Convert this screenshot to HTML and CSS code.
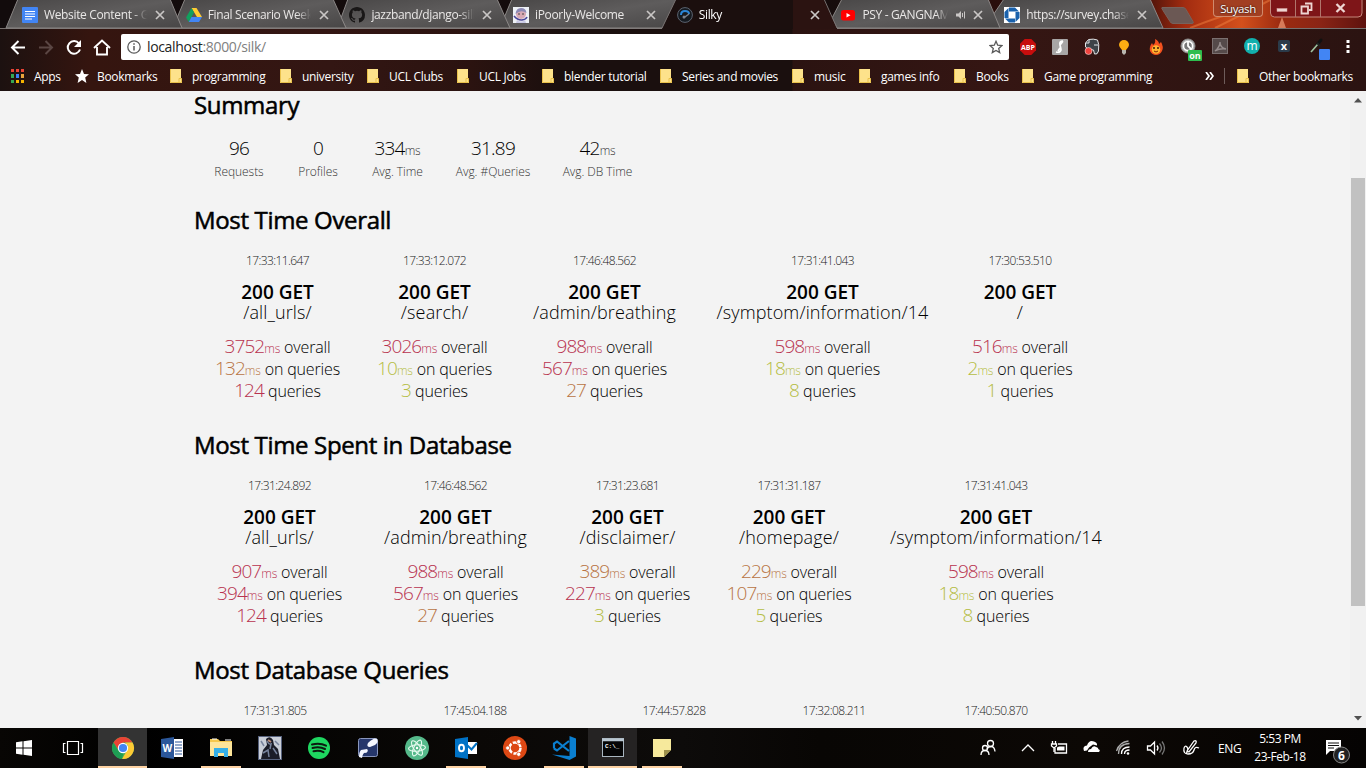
FILE: index.html
```html
<!DOCTYPE html>
<html lang="en">
<head>
<meta charset="utf-8">
<title>Silky</title>
<link rel="stylesheet" href="styles.css">
</head>
<body>
<svg class="defs" width="0" height="0">
  <defs>
    <symbol id="close" viewBox="0 0 10 10"><path d="M1 1l8 8M9 1L1 9" stroke="#c9c6c5" stroke-width="1.7"/></symbol>
    <symbol id="folder" viewBox="0 0 12 14"><path d="M0 0h11v9.500h1V14H0z" fill="#fde28b"/><path d="M.5 0v13.500H9V9.500h2.500V13.500H9" fill="none" stroke="#e9c14b"/></symbol>
  </defs>
</svg>
<header class="browser">
  <div class="tabstrip">
    <svg class="tabshapes" width="1366" height="29" viewBox="0 0 1366 29">
      <defs>
        <linearGradient id="tg" x1="0" x2="1" y1="0" y2="1"><stop offset="0" stop-color="#484646"/><stop offset=".5" stop-color="#5e5c5c"/><stop offset="1" stop-color="#484646"/></linearGradient>
        <linearGradient id="fire" x1="0" x2="1"><stop offset="0" stop-color="#3a0d08"/><stop offset=".2" stop-color="#a32c10"/><stop offset=".45" stop-color="#d4501c"/><stop offset=".62" stop-color="#9c2b10"/><stop offset=".8" stop-color="#8a2415"/><stop offset="1" stop-color="#5e120e"/></linearGradient>
      </defs>
      <path d="M1140 0H1366V28H1140z" fill="url(#fire)"/>
      <path d="M1215 28q40-20 55-28M1190 28q30-12 60-20" stroke="#f08040" stroke-width="2" fill="none" opacity=".5"/>
      <path d="M1282 17l4 11h-8z" fill="#ffb08a" opacity=".6"/>
      <path d="M0 28.500H662M837 28.500H1366" stroke="#77706e"/>
      <g stroke="#8a8685" fill="url(#tg)">
        <path d="M1000 28L991 18 1004 -1H1150L1163 28z"/>
        <path d="M837 28L832 18 842 -1H988L1000 28z"/>
        <path d="M510 28L504 18 512 -1H680L666 28z"/>
        <path d="M346 28L341 18 348 -1H497L510 28z"/>
        <path d="M182 28L177 18 185 -1H333L346 28z"/>
        <path d="M6 28L18 -1H170L182 28z"/>
      </g>
      <path d="M662 29L676 -1H824L837 29z" fill="#1b0f0e"/>
      <path d="M793 0H824L837 29H793z" fill="#2b1311"/>
      <path d="M662 28L676 -1M824 -1L837 28" stroke="#777170" fill="none"/>
      <path d="M1162 7.500h21q2 0 3 2l7 12q1 2-1 2h-19q-2 0-3-2l-7-11q-2-3-1-3z" fill="#6b5854" stroke="#77625c"/>
    </svg>
    <div class="tabs">
      <div class="tab"><svg class="fav" viewBox="0 0 16 16"><rect width="16" height="16" rx="1" fill="#4285f4"/><path d="M3 4.500h10M3 7h10M3 9.500h10M3 12h7" stroke="#fff" stroke-width="1.200"/></svg><span class="tt">Website Content - G</span><svg class="x"><use href="#close"/></svg></div>
      <div class="tab"><svg class="fav" viewBox="0 0 16 16"><path d="M5.500 1h5L16 10h-5z" fill="#fc3"/><path d="M5.500 1L8 5.500 2.800 15 0 10.500z" fill="#11a05d"/><path d="M5.500 10H16l-3 5H2.800z" fill="#4285f4"/></svg><span class="tt">Final Scenario Week</span><svg class="x"><use href="#close"/></svg></div>
      <div class="tab"><svg class="fav" viewBox="0 0 16 16"><path fill="#191717" d="M8 0C3.580 0 0 3.580 0 8c0 3.540 2.290 6.530 5.470 7.590.4.070.55-.17.55-.38 0-.19-.01-.82-.01-1.490-2.010.37-2.530-.49-2.690-.94-.09-.23-.48-.94-.82-1.130-.28-.15-.68-.52-.01-.53.63-.01 1.080.58 1.230.82.72 1.210 1.870.87 2.330.66.07-.52.28-.87.51-1.070-1.780-.2-3.640-.89-3.640-3.950 0-.87.31-1.590.82-2.150-.08-.2-.36-1.020.08-2.120 0 0 .67-.21 2.200.82a7.600 7.600 0 014 0c1.530-1.040 2.200-.82 2.200-.82.44 1.100.16 1.920.08 2.120.51.56.82 1.270.82 2.150 0 3.070-1.870 3.750-3.650 3.950.29.25.54.73.54 1.480 0 1.070-.01 1.930-.01 2.200 0 .21.15.46.55.38A8 8 0 0016 8c0-4.420-3.580-8-8-8z"/></svg><span class="tt">jazzband/django-silk</span><svg class="x"><use href="#close"/></svg></div>
      <div class="tab"><svg class="fav" viewBox="0 0 16 16"><rect width="16" height="16" fill="#eef1f6"/><circle cx="8" cy="7" r="5" fill="#d8a9b4"/><path d="M2.500 7Q3 1 8 1t5.500 5Q8 2 2.500 7z" fill="#8d8ab5"/><path d="M1 9q4 4.500 8 4t5-3" fill="none" stroke="#4a4598" stroke-width="1.600"/><path d="M4 13q4 3 8 0l1 3H3z" fill="#c9c8e4"/><path d="M5 7h2M9 7h2" stroke="#444"/></svg><span class="tt">iPoorly-Welcome</span><svg class="x"><use href="#close"/></svg></div>
      <div class="tab"><svg class="fav" viewBox="0 0 16 16"><circle cx="8" cy="8" r="7.400" fill="#151a20" stroke="#5c6470"/><path d="M4 8Q4 4 8 4t4 3" fill="none" stroke="#2a86d8" stroke-width="2"/><path d="M6.500 11L12 7" stroke="#79828e" stroke-width="1.500"/><circle cx="7" cy="10" r="1.500" fill="#79828e"/></svg><span class="tt on">Silky</span><svg class="x"><use href="#close"/></svg></div>
      <div class="tab"><svg class="fav" viewBox="0 0 16 16"><rect x="1" y="3" width="14" height="10.500" rx="2.500" fill="#f00"/><path d="M6.500 6v4.500l4-2.250z" fill="#fff"/></svg><span class="tt short">PSY - GANGNAM</span><svg class="spk" viewBox="0 0 10 10"><path d="M0 3.500h2.500L5 1v8L2.500 6.500H0z" fill="#c9c6c5"/><path d="M6.500 3v4M8.500 1.500v7" stroke="#c9c6c5"/></svg><svg class="x"><use href="#close"/></svg></div>
      <div class="tab"><svg class="fav" viewBox="0 0 16 16"><rect width="16" height="16" fill="#fff"/><path d="M5 .5h6l4 4H5zM15.500 5v6l-4 4V5zM11 15.500H5l-4-4h10zM.5 11V5l4-4v10z" fill="#1961ac"/><path d="M5 5h6v6H5z" fill="#fff"/></svg><span class="tt">https://survey.chase</span><svg class="x"><use href="#close"/></svg></div>
    </div>
    <div class="user">Suyash</div>
    <div class="wincontrols">
      <svg width="93" height="18" viewBox="0 0 93 18"><path d="M.5 -1V13q0 4 4 4H88q4 0 4-4V-1z" fill="#7e1518" stroke="#c4867a"/><path d="M25.500 0v17M50.500 0v17" stroke="#b0756c"/><rect x="7" y="8.500" width="10" height="3" fill="#eed5d2" stroke="#d5a4a0" stroke-width=".5"/><path d="M35 3.500h6.500V10H39M31.500 6.500h6.500v7h-6.500z" fill="none" stroke="#eed5d2" stroke-width="1.800"/><path d="M66.500 4l8 8M74.500 4l-8 8" stroke="#eed5d2" stroke-width="2.300"/></svg>
    </div>
  </div>
  <div class="toolbar">
    <svg class="nav" width="111" height="38" viewBox="0 0 111 38" fill="none" stroke="#fff" stroke-width="2">
      <path d="M25 18.500H12.500M18.500 12l-6.500 6.500 6.500 6.500"/>
      <path d="M39 18.500h12.500M45.500 12l6.500 6.500-6.500 6.500" stroke="#5a4643"/>
      <path d="M79 14.500A6.300 6.300 0 1080 20.500"/><path d="M81 11v7h-7z" fill="#fff" stroke="none"/>
      <path d="M94 19l8-7.500 8 7.500M97 18v7.500h10V18" stroke-width="1.900"/>
    </svg>
    <div class="omnibox">
      <svg width="14" height="14" viewBox="0 0 14 14"><circle cx="7" cy="7" r="6.200" fill="none" stroke="#5a5a5a" stroke-width="1.300"/><path d="M7 6v4.500M7 3.300v1.500" stroke="#5a5a5a" stroke-width="1.500"/></svg>
      <span class="url">localhost<i>:8000/silk/</i></span>
      <svg class="star" width="14" height="14" viewBox="0 0 14 14"><path d="M7 1.300l1.700 3.900 4.200.4-3.200 2.800 1 4.200L7 10.400l-3.700 2.200 1-4.200L1.100 5.600l4.200-.4z" fill="none" stroke="#5a5a5a" stroke-width="1.300"/></svg>
    </div>
    <div class="exts">
      <svg viewBox="0 0 32 32"><path d="M12.700 8h6.600L24 12.700v6.600L19.300 24h-6.600L8 19.300v-6.600z" fill="#c70d0d"/><text x="16" y="19" class="abp">ABP</text></svg>
      <svg viewBox="0 0 32 32"><rect x="8" y="8" width="16" height="16" rx="1" fill="#a8a6a6"/><path d="M19 10q-4 0-3 4t1 5q-1 3-5 2M19 10q-2 3-3 4M16 17l-2 3" fill="none" stroke="#fff" stroke-width="1.700"/></svg>
      <svg viewBox="0 0 32 32"><path d="M9.500 12l3-3.500q5-1 9 .5 2 4 1 11-1 4-4 3l-1-4q-6 0-8-3z" fill="#3d4348" stroke="#e3e5e6"/><path d="M10 12h3V9M18 14h4" stroke="#dfe5e7" fill="none"/><circle cx="12.500" cy="20" r="3.500" fill="#f0443f" stroke="#fff" stroke-width=".5"/></svg>
      <svg viewBox="0 0 32 32"><path d="M16 9a5 5 0 00-5 5q0 2 3 5h4q3-3 3-5a5 5 0 00-5-5z" fill="#fcae12"/><path d="M14 19h4v3l-2 2-2-2z" fill="#b9b6ae"/></svg>
      <svg viewBox="0 0 32 32"><path d="M15 8q4 2 4 5l2-2q3 5 1 9-2 4-6 4t-6-4q-1-4 2-8l1 2q3-2 2-6z" fill="#f4511e"/><circle cx="16" cy="18.500" r="4.300" fill="#ffb52e"/><path d="M13 17h2M17 17h2" stroke="#3b1a08" stroke-width="1.500"/><path d="M14 20q2 2 4 0" stroke="#7a260a" fill="none"/></svg>
      <svg viewBox="0 0 32 32"><circle cx="16" cy="15" r="7" fill="#bbb" stroke="#888"/><circle cx="16" cy="15" r="4.500" fill="#777" stroke="#fff" stroke-width="1.500"/><path d="M16 11v4l3 3" stroke="#fff" stroke-width="1.800" fill="none"/><rect x="16" y="19" width="14" height="11" rx="1" fill="#2dbd4e"/><text x="23" y="28" class="onb">on</text></svg>
      <svg viewBox="0 0 32 32"><rect x="8.500" y="7.500" width="15" height="15" fill="#554a4a" stroke="#7b7070"/><path d="M11 20q5-4 5-9 0 6 6 7-6-1-11 2z" fill="none" stroke="#958b8b" stroke-width="1.400"/></svg>
      <svg viewBox="0 0 32 32"><circle cx="16" cy="15" r="8" fill="#12b0ad"/><text x="16" y="19" class="em">m</text></svg>
      <svg viewBox="0 0 32 32"><rect x="10" y="9" width="12" height="12" rx="2" fill="#2b3b4a"/><text x="16" y="19" class="ex">x</text></svg>
      <svg viewBox="0 0 32 32"><path d="M21 9l-4 5" stroke="#111" stroke-width="3" stroke-linecap="round"/><path d="M18 13l-7 8" stroke="#9fc2a0" stroke-width="1.600"/><path d="M17 12l3 3" stroke="#222" stroke-width="2"/><rect x="19" y="18" width="11" height="11" rx="1" fill="#4285f4"/></svg>
      <svg viewBox="0 0 32 32"><path d="M14.500 9h3v3h-3zM14.500 14h3v3h-3zM14.500 19h3v3h-3z" fill="#fff"/></svg>
    </div>
  </div>
  <div class="bookmarks">
    <span class="bm apps"><svg width="13" height="14" viewBox="0 0 13 14"><path d="M0 0h3v3H0zM5 0h3v3H5zM10 0h3v3h-3z" fill="#ea4335"/><path d="M0 5h3v4H0z" fill="#34a853"/><path d="M5 5h3v4H5z" fill="#3b82f6"/><path d="M10 5h3v4h-3z" fill="#e8a33c"/><path d="M0 11h3v3H0z" fill="#34a853"/><path d="M5 11h3v3H5zM10 11h3v3h-3z" fill="#f5b400"/></svg>Apps</span>
    <span class="bm fav-bm"><svg width="14" height="14" viewBox="0 0 14 14"><path d="M7 0l2 4.900 5 .4-3.800 3.300L11.400 14 7 11 2.600 14l1.200-5.400L0 5.300l5-.4z" fill="#fff"/></svg>Bookmarks</span>
    <span class="bm"><svg class="fo"><use href="#folder"/></svg>programming</span>
    <span class="bm"><svg class="fo"><use href="#folder"/></svg>university</span>
    <span class="bm"><svg class="fo"><use href="#folder"/></svg>UCL Clubs</span>
    <span class="bm"><svg class="fo"><use href="#folder"/></svg>UCL Jobs</span>
    <span class="bm"><svg class="fo"><use href="#folder"/></svg>blender tutorial</span>
    <span class="bm"><svg class="fo"><use href="#folder"/></svg>Series and movies</span>
    <span class="bm"><svg class="fo"><use href="#folder"/></svg>music</span>
    <span class="bm"><svg class="fo"><use href="#folder"/></svg>games info</span>
    <span class="bm"><svg class="fo"><use href="#folder"/></svg>Books</span>
    <span class="bm"><svg class="fo"><use href="#folder"/></svg>Game programming</span>
    <span class="bm more"><svg width="9" height="8" viewBox="0 0 9 8"><path d="M1 0l3 4-3 4M5 0l3 4-3 4" fill="none" stroke="#fff" stroke-width="1.700"/></svg></span>
    <span class="bm"><svg class="fo"><use href="#folder"/></svg>Other bookmarks</span>
  </div>
</header>
<div class="viewport">
  <main>
    <h2>Summary</h2>
    <div class="summary">
      <div><p class="val">96</p><p class="lab">Requests</p></div>
      <div><p class="val">0</p><p class="lab">Profiles</p></div>
      <div><p class="val">334<small>ms</small></p><p class="lab">Avg. Time</p></div>
      <div><p class="val">31.89</p><p class="lab">Avg. #Queries</p></div>
      <div><p class="val">42<small>ms</small></p><p class="lab">Avg. DB Time</p></div>
    </div>
    <h2>Most Time Overall</h2>
    <div class="cells overall">
      <div><time>17:33:11.647</time><b>200 GET</b><p class="path">/all_urls/</p><p class="m"><i class="bad">3752<small>ms</small></i> overall</p><p class="m"><i class="mid">132<small>ms</small></i> on queries</p><p class="m"><i class="bad">124</i> queries</p></div>
      <div><time>17:33:12.072</time><b>200 GET</b><p class="path">/search/</p><p class="m"><i class="bad">3026<small>ms</small></i> overall</p><p class="m"><i class="good">10<small>ms</small></i> on queries</p><p class="m"><i class="good">3</i> queries</p></div>
      <div><time>17:46:48.562</time><b>200 GET</b><p class="path">/admin/breathing</p><p class="m"><i class="bad">988<small>ms</small></i> overall</p><p class="m"><i class="bad">567<small>ms</small></i> on queries</p><p class="m"><i class="mid">27</i> queries</p></div>
      <div><time>17:31:41.043</time><b>200 GET</b><p class="path">/symptom/information/14</p><p class="m"><i class="bad">598<small>ms</small></i> overall</p><p class="m"><i class="good">18<small>ms</small></i> on queries</p><p class="m"><i class="good">8</i> queries</p></div>
      <div><time>17:30:53.510</time><b>200 GET</b><p class="path">/</p><p class="m"><i class="bad">516<small>ms</small></i> overall</p><p class="m"><i class="good">2<small>ms</small></i> on queries</p><p class="m"><i class="good">1</i> queries</p></div>
    </div>
    <h2>Most Time Spent in Database</h2>
    <div class="cells database">
      <div><time>17:31:24.892</time><b>200 GET</b><p class="path">/all_urls/</p><p class="m"><i class="bad">907<small>ms</small></i> overall</p><p class="m"><i class="bad">394<small>ms</small></i> on queries</p><p class="m"><i class="bad">124</i> queries</p></div>
      <div><time>17:46:48.562</time><b>200 GET</b><p class="path">/admin/breathing</p><p class="m"><i class="bad">988<small>ms</small></i> overall</p><p class="m"><i class="bad">567<small>ms</small></i> on queries</p><p class="m"><i class="mid">27</i> queries</p></div>
      <div><time>17:31:23.681</time><b>200 GET</b><p class="path">/disclaimer/</p><p class="m"><i class="mid">389<small>ms</small></i> overall</p><p class="m"><i class="bad">227<small>ms</small></i> on queries</p><p class="m"><i class="good">3</i> queries</p></div>
      <div><time>17:31:31.187</time><b>200 GET</b><p class="path">/homepage/</p><p class="m"><i class="mid">229<small>ms</small></i> overall</p><p class="m"><i class="mid">107<small>ms</small></i> on queries</p><p class="m"><i class="good">5</i> queries</p></div>
      <div><time>17:31:41.043</time><b>200 GET</b><p class="path">/symptom/information/14</p><p class="m"><i class="bad">598<small>ms</small></i> overall</p><p class="m"><i class="good">18<small>ms</small></i> on queries</p><p class="m"><i class="good">8</i> queries</p></div>
    </div>
    <h2>Most Database Queries</h2>
    <div class="cells queries">
      <div><time>17:31:31.805</time></div><div><time>17:45:04.188</time></div><div><time>17:44:57.828</time></div><div><time>17:32:08.211</time></div><div><time>17:40:50.870</time></div>
    </div>
  </main>
  <div class="scroll"><svg width="8" height="5" viewBox="0 0 8 5"><path d="M0 4.500L4 0l4 4.500z" fill="#505050"/></svg><div class="thumb"></div><svg class="dn" width="8" height="5" viewBox="0 0 8 5"><path d="M0 0h8L4 4.500z" fill="#505050"/></svg></div>
</div>
<footer class="taskbar">
  <div class="tasks">
    <span class="t"><svg viewBox="0 0 24 24"><path d="M4 6.300l6.500-1v6.200H4zM11.500 5.200L20 4v7.500h-8.500zM4 12.500h6.500v6.200L4 17.800zM11.500 12.500H20V20l-8.500-1.200z" fill="#fff"/></svg></span>
    <span class="t"><svg viewBox="0 0 24 24" fill="none" stroke="#fff" stroke-width="1.200"><path d="M6.500 5.500h11v13h-11zM4.500 7.500h-2v9h2M19.500 7.500h2v9h-2"/></svg></span>
    <span class="t active run"><svg viewBox="0 0 24 24"><circle cx="12" cy="12" r="11" fill="#4caf50"/><path d="M2.500 6.500A11 11 0 0121.500 6.500H12L7.500 14z" fill="#ea4335"/><path d="M21.500 6.500A11 11 0 0111 23l5-8.500 1-5-3-3z" fill="#fcc934"/><path d="M2.500 6.500L7.300 14.700l5 2.500L11 23A11 11 0 012.500 6.500z" fill="#1e9e54"/><circle cx="12" cy="12" r="5.200" fill="#fff"/><circle cx="12" cy="12" r="4.100" fill="#4285f4"/></svg></span>
    <span class="t"><svg viewBox="0 0 24 24"><path d="M13 3h10v18H13z" fill="#fff"/><path d="M15 6h7M15 9h7M15 12h7M15 15h7M15 18h7" stroke="#2b579a" stroke-width="1.200"/><path d="M1 3l13-2v22L1 21z" fill="#2b579a"/><text x="7.300" y="15.500" class="wd">W</text></svg></span>
    <span class="t run2"><svg viewBox="0 0 24 24"><path d="M1 3h8l2 2h12v15H1z" fill="#f5c84c"/><path d="M1 6h22v14H1z" fill="#fde59a"/><path d="M3 3h5M16 4h6" stroke="#fff"/><path d="M5 21v-9h14v9h-4v-4H9v4z" fill="#36b0e8"/></svg></span>
    <span class="t"><svg viewBox="0 0 24 24"><rect x=".5" y=".5" width="23" height="23" fill="#c9ced8" stroke="#56617c"/><path d="M8 3q4-4 7 1l1 5 4 4 2 10H3l2-9 4-5z" fill="#1b1d28"/><path d="M9 5q2 4 4 3l-1 5M15 12l4 6M5 17l5-3 1 7M17 5l4 4M3 5l3 5" stroke="#77839d" fill="none" stroke-width="1.500"/><path d="M10 4l3 2" stroke="#b88a78" stroke-width="2"/></svg></span>
    <span class="t"><svg viewBox="0 0 24 24"><circle cx="12" cy="12" r="11" fill="#1ed760"/><path d="M5 8.500q8-2 14 1.200M5.500 12q7-1.800 12.500 1M6.500 15.300q5.500-1.300 10 .9" stroke="#0b1a10" stroke-width="2" fill="none" stroke-linecap="round"/></svg></span>
    <span class="t"><svg viewBox="0 0 24 24"><rect x="2.500" y="2.500" width="19" height="18" rx="2" fill="#26376c" stroke="#8996bd"/><path d="M12 7q6-6 9-4 2 3-2 6l-5 2q-4 0-2-4zM3 21q0-5 2-7l6-1q2 2-1 4-3-1-4 5z" fill="#f5f7ff"/></svg></span>
    <span class="t"><svg viewBox="0 0 24 24"><circle cx="12" cy="12" r="12" fill="#55b98a"/><g fill="none" stroke="#e7faef" stroke-width="1.100"><ellipse cx="12" cy="12" rx="3.200" ry="8.500" transform="rotate(25 12 12)"/><ellipse cx="12" cy="12" rx="3.200" ry="8.500" transform="rotate(-35 12 12)"/><ellipse cx="12" cy="12" rx="3.200" ry="8.500" transform="rotate(85 12 12)"/></g><circle cx="12" cy="12" r="1.200" fill="#fff"/></svg></span>
    <span class="t run2"><svg viewBox="0 0 24 24"><path d="M12 6h11v12H12z" fill="#fff"/><path d="M13 9l4.500 4.500L23 7" stroke="#0072c6" stroke-width="2" fill="none"/><path d="M1 3l13-2v22L1 21z" fill="#0072c6"/><ellipse cx="7.500" cy="12" rx="2.500" ry="3.300" fill="none" stroke="#fff" stroke-width="1.900"/></svg></span>
    <span class="t"><svg viewBox="0 0 24 24"><circle cx="12" cy="12" r="12" fill="#dd4814"/><circle cx="12" cy="12" r="5.500" fill="none" stroke="#fff" stroke-width="2.500" stroke-dasharray="10 1.500"/><g fill="#fff" stroke="#dd4814" stroke-width=".8"><circle cx="4.700" cy="12" r="2.100"/><circle cx="15.700" cy="5.700" r="2.100"/><circle cx="15.700" cy="18.300" r="2.100"/></g></svg></span>
    <span class="t run2"><svg viewBox="0 0 24 24"><path d="M17.500 0L24 2.500v18L17.500 24 0 18.500l17.500 1.500z" fill="#0a7fd0"/><path d="M17 5L5 14.500 2 12.500M17 15L5 5.500 2 7.500V12.500" fill="none" stroke="#0a7fd0" stroke-width="2.200"/></svg></span>
    <span class="t cmd run"><svg viewBox="0 0 24 24"><rect x="1.500" y="2.500" width="21" height="18" fill="#050505" stroke="#a9b6c0"/><path d="M1 4h22" stroke="#b8c6d0" stroke-width="2.500"/><text x="4" y="11.500" class="cm">C:\_</text></svg></span>
    <span class="t run2"><svg viewBox="0 0 24 24"><path d="M3 3h18v11l-7 7H3z" fill="#f6e99c"/><path d="M14 21v-7h7z" fill="#9c8f4a"/></svg></span>
  </div>
  <div class="tray">
    <svg width="230" height="40" viewBox="0 0 230 40" fill="none" stroke="#fff" stroke-width="1.300">
      <g transform="translate(-18 0)"><circle cx="30.500" cy="15.500" r="3"/><path d="M27 21q1-2.500 4-2.500 3.500 0 4 5"/><circle cx="25" cy="20" r="2.500"/><path d="M21 27q0-4.500 4-4.500t4 4.500"/></g>
      <path d="M44 23l6-6 6 6"/>
      <path d="M80 16h8.500v9H77v-5" /><path d="M81 18.500h5.500v4H79v-3z" fill="#fff" stroke="none"/><path d="M74.500 13v3M77.500 13v3M73.500 16h5v2l-2.500 2-2.500-2zM76 20v4"/>
      <path d="M106 23q-2-5 3-5.500 2-6 7-4 3.500 1 3 4l-4-1-4 3-2 3z" fill="#fff" stroke="none"/><path d="M110 24q0-3 3-3 2-4 5-2 3 1 2 2 3 1 1 3z" fill="#fff" stroke="none"/>
      <path d="M143.500 26q0-7 8-7M146.500 26q0-4 5-4"/><path d="M140.500 26q0-10 11-10.500M138.500 23q3-9 12-10" stroke="#aaa"/><circle cx="150" cy="25.500" r="1.300" fill="#fff" stroke="none"/>
      <path d="M169.500 18h3l4-4v12l-4-4h-3zM179 17.500q2 2.500 0 5"/><path d="M181.500 15.500q4 4.500 0 9M184 13.500q5 6.500 0 13" stroke="#777"/>
      <path d="M206 20q-1 6 4 6t6-4 5-2M209 23l7-10q3-1 2 2l-7 9zM206 20q1-3 3-1t-1 7"/>
    </svg>
    <span class="lang">ENG</span>
    <span class="clock"><span>5:53 PM</span><span>23-Feb-18</span></span>
    <svg class="note" width="26" height="28" viewBox="0 0 26 28"><path d="M1 4h15v11H5l-4 4z" fill="#fff"/><path d="M3 7h11M3 9.500h11M3 12h6" stroke="#111"/><circle cx="16.500" cy="19" r="8" fill="#222" stroke="#888"/><text x="16.500" y="23.500" class="six">6</text></svg>
  </div>
</footer>
</body>
</html>
```
FILE: styles.css
```css
* { box-sizing: border-box; }
body { margin: 0; width: 1366px; height: 768px; overflow: hidden; display: flex; flex-direction: column; background: #f3f3f3; font-family: "Open Sans", sans-serif; }
p, h2 { margin: 0; }
i { font-style: normal; }
.defs { position: absolute; }

.browser { height: 91px; flex: none; color: #fff; background: linear-gradient(90deg, #1c1110 0, #35150f 90px, #331613 330px, #2b1310 470px, #1a0f0e 560px, #1a0f0e 792px, #2b1311 793px, #351613 1000px, #2b1311 1366px); }
.tabstrip { position: relative; height: 29px; display: flex; background: linear-gradient(90deg, #120b0c, #150c0c 60%, #35100c 80%, #5e120e); }
.tabshapes { position: absolute; left: 0; top: 0; }
.tabs { position: relative; display: flex; padding-left: 22px; width: 1213px; flex: none; }
.tab { width: 163.700px; flex: none; display: flex; align-items: center; }
.fav { width: 16px; height: 16px; margin-right: 6px; flex: none; }
.tt { width: 103px; flex: none; font-size: 12px; letter-spacing: -0.350px; color: #e9e7e6; white-space: nowrap; overflow: hidden; -webkit-mask-image: linear-gradient(90deg, #000 86%, transparent); mask-image: linear-gradient(90deg, #000 86%, transparent); }
.tt.on { color: #fff; }
.tt.short { width: 86px; }
.spk { width: 10px; height: 10px; margin: 0 -1px 0 8px; flex: none; }
.x { width: 10px; height: 10px; margin-left: 8px; flex: none; }
.user { position: relative; width: 50px; height: 17px; border: 1px solid #d08a6c; border-top: 0; border-radius: 0 0 4px 4px; background: #a23f22; font-size: 11.500px; line-height: 17px; text-align: center; letter-spacing: -0.400px; text-shadow: 0 0 2px #000; }
.wincontrols { position: relative; margin-left: 7px; height: 18px; display: flex; }

.toolbar { height: 33px; display: flex; align-items: flex-start; }
.nav { margin-right: 10px; flex: none; }
.omnibox { width: 888px; height: 26px; margin-top: 5px; padding: 0 6px 0 6px; background: #fff; border-radius: 2px; display: flex; align-items: center; flex: none; }
.url { margin-left: 6px; color: #222; font-size: 14px; letter-spacing: -0.350px; flex: 1; line-height: 24px; }
.url i { color: #808080; }
.exts { display: flex; padding: 2px 0 0 3px; }
.exts svg { width: 32px; height: 32px; }
.exts text { text-anchor: middle; fill: #fff; font-weight: 700; }
.abp { font-size: 7px; }
.onb { font-size: 9px; }
.exts .em { font-size: 12px; font-weight: 400; }
.ex { font-size: 11px; }
.bookmarks { height: 28px; padding-left: 11px; display: grid; align-items: center; grid-template-columns: 64px 95px 110px 87px 90px 85px 118px 132px 67px 95px 68px 183px 32px 120px; }
.bm { display: flex; align-items: center; gap: 10px; font-size: 12px; letter-spacing: -0.300px; white-space: nowrap; }
.bm svg { flex: none; }
.bm.more { height: 16px; border-right: 1px solid #6e5c5a; width: 20px; }
.bm.fav-bm { gap: 8px; }
.bm .fo { width: 12px; height: 14px; }

.viewport { height: 637px; flex: none; display: flex; justify-content: space-between; overflow: hidden; background: #f3f3f3; }
main { width: 1150px; padding-left: 194px; color: #000; }
h2 { height: 28px; line-height: 27px; font-size: 24px; font-weight: 400; letter-spacing: -0.340px; -webkit-text-stroke: 0.550px #000; white-space: nowrap; }
.summary { height: 87px; padding: 18px 0 0 3px; display: grid; grid-template-columns: 84px 74px 85px 106px 103px; text-align: center; white-space: nowrap; }
small { line-height: 0; }
.val { height: 22px; font-size: 19px; line-height: 22px; font-weight: 300; letter-spacing: -0.800px; }
.val small { font-size: 12px; letter-spacing: -0.200px; color: #333; }
.lab { margin-top: 4px; font-size: 12px; line-height: 18px; font-weight: 300; letter-spacing: -0.050px; color: #333; }
.cells { height: 197px; padding: 19px 0 0 3px; display: grid; text-align: center; white-space: nowrap; font-weight: 300; }
.cells > div { display: flex; flex-direction: column; align-items: center; }
.overall { grid-template-columns: 161px 153px 187px 249px 146px; }
.database { grid-template-columns: 165px 187px 157px 166px 248px; }
.queries { grid-template-columns: 156px 244px 154px 166px 158px; }
time { font-size: 12px; line-height: 16px; margin-bottom: 13px; letter-spacing: -0.600px; color: #222; }
b { font-size: 19px; line-height: 20px; font-weight: 600; letter-spacing: 0; }
.path { font-size: 18px; line-height: 21px; margin-bottom: 14px; letter-spacing: 0.130px; }
.m { font-size: 16px; line-height: 21px; height: 22px; letter-spacing: -0.150px; }
.m i { font-size: 19px; line-height: 0; letter-spacing: -0.900px; }
.m small { font-size: 12px; letter-spacing: -0.200px; }
.bad { color: #b8324f; }
.mid { color: #b87343; }
.good { color: #b5bd44; }
.scroll { width: 16px; background: #f1f1f1; display: flex; flex-direction: column; align-items: center; padding-top: 7px; }
.thumb { width: 14px; height: 428px; margin-top: 75px; background: #c1c1c1; }
.scroll .dn { margin-top: 110px; }

.taskbar { height: 40px; flex: none; display: flex; justify-content: space-between; color: #fff; background: linear-gradient(90deg, #080604, #000 10%, #0a0806 35%, #0d0b0a 50%, #080604 60%, #0c0805 80%, #050302); }
.tasks { display: flex; }
.t { width: 49px; height: 40px; display: flex; align-items: center; justify-content: center; border-bottom: 2px solid transparent; padding-top: 1px; }
.t:first-child { width: 48px; }
.t svg { width: 24px; height: 24px; }
.t:nth-child(2) { width: 50px; }
.active { background: #333; border-color: #fdd2a3; }
.cmd { background: #252323; border-color: #fdd2a3; }
.run2 { background: linear-gradient(#fdd2a3, #fdd2a3) 50% 100% / 40px 2px no-repeat border-box; }
.wd { font-size: 10px; font-weight: 700; fill: #fff; text-anchor: middle; }
.cm { font: 700 6px "Liberation Mono", monospace; fill: #fff; }
.tray { display: flex; align-items: center; width: 388px; }
.tray > svg:first-child { flex: none; }
.lang { width: 32px; margin-left: 10px; font-size: 12px; letter-spacing: -0.300px; }
.clock { width: 62px; margin-left: -1px; display: flex; flex-direction: column; align-items: center; font-size: 12px; line-height: 18px; letter-spacing: -0.450px; white-space: nowrap; }
.note { margin: 4px 0 0 14px; }
.six { font-size: 12px; font-weight: 700; fill: #fff; text-anchor: middle; }
```
